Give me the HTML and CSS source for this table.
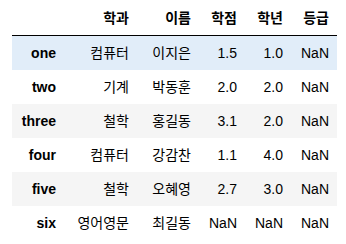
FILE: index.html
```html
<!DOCTYPE html>
<html>
<head>
<meta charset="utf-8">
<link rel="stylesheet" href="styles.css">
</head>
<body>
<div class="wrap">
<table class="dataframe">
  <colgroup>
    <col class="c-idx"><col class="c-dept"><col class="c-name"><col class="c-num"><col class="c-num"><col class="c-num">
  </colgroup>
  <thead>
    <tr><th></th><th>학과</th><th>이름</th><th>학점</th><th>학년</th><th>등급</th></tr>
  </thead>
  <tbody>
    <tr class="hover"><th>one</th><td>컴퓨터</td><td>이지은</td><td>1.5</td><td>1.0</td><td>NaN</td></tr>
    <tr><th>two</th><td>기계</td><td>박동훈</td><td>2.0</td><td>2.0</td><td>NaN</td></tr>
    <tr><th>three</th><td>철학</td><td>홍길동</td><td>3.1</td><td>2.0</td><td>NaN</td></tr>
    <tr><th>four</th><td>컴퓨터</td><td>강감찬</td><td>1.1</td><td>4.0</td><td>NaN</td></tr>
    <tr><th>five</th><td>철학</td><td>오혜영</td><td>2.7</td><td>3.0</td><td>NaN</td></tr>
    <tr><th>six</th><td>영어영문</td><td>최길동</td><td>NaN</td><td>NaN</td><td>NaN</td></tr>
  </tbody>
</table>
</div>
</body>
</html>
```
FILE: styles.css
```css
html, body {
  margin: 0;
  padding: 0;
  background: #ffffff;
}
.wrap {
  padding: 1px 12px 0 12px;
}
.dataframe {
  border-collapse: collapse;
  border-spacing: 0;
  table-layout: fixed;
  width: 325px;
  font-family: "Liberation Sans", "Noto Sans CJK KR", sans-serif;
  font-size: 14px;
  color: #000000;
}
.c-idx { width: 52px; }
.c-dept { width: 73px; }
.c-name { width: 62px; }
.c-num { width: 46px; }
.dataframe th,
.dataframe td {
  text-align: right;
  vertical-align: middle;
  padding: 9px 8px 9px 0;
  line-height: 16px;
  white-space: nowrap;
  overflow: visible;
}
.dataframe thead th {
  font-weight: bold;
  border-bottom: 1px solid #000000;
}
.dataframe tbody th {
  font-weight: bold;
}
.dataframe td {
  font-weight: normal;
}
.dataframe tbody tr:nth-child(odd) {
  background: #f5f5f5;
}
.dataframe tbody tr.hover {
  background: #e1edf9;
}
```
